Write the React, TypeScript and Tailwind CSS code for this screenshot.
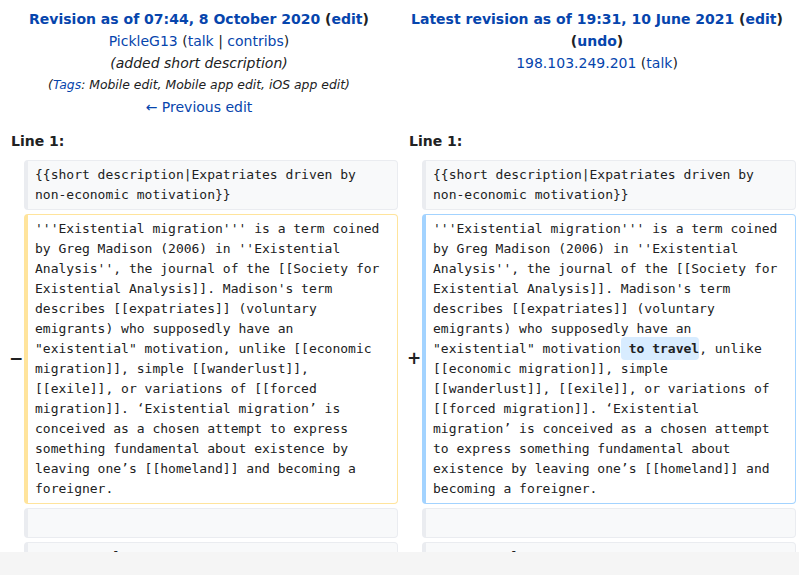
import React from 'react';

const link = 'text-[#0645ad]';

const oldLines = [
  "'''Existential migration''' is a term coined",
  "by Greg Madison (2006) in ''Existential",
  "Analysis'', the journal of the [[Society for",
  "Existential Analysis]]. Madison's term",
  'describes [[expatriates]] (voluntary',
  'emigrants) who supposedly have an',
  '"existential" motivation, unlike [[economic',
  'migration]], simple [[wanderlust]],',
  '[[exile]], or variations of [[forced',
  'migration]]. ‘Existential migration’ is',
  'conceived as a chosen attempt to express',
  'something fundamental about existence by',
  'leaving one’s [[homeland]] and becoming a',
  'foreigner.',
];

const newLines: React.ReactNode[] = [
  "'''Existential migration''' is a term coined",
  "by Greg Madison (2006) in ''Existential",
  "Analysis'', the journal of the [[Society for",
  "Existential Analysis]]. Madison's term",
  'describes [[expatriates]] (voluntary',
  'emigrants) who supposedly have an',
  <>
    "existential" motivation
    <span className="bg-[#d8ecff] font-bold rounded-[4px] py-[4px]">{'\u00a0'}to travel</span>, unlike
  </>,
  '[[economic migration]], simple',
  '[[wanderlust]], [[exile]], or variations of',
  '[[forced migration]]. ‘Existential',
  'migration’ is conceived as a chosen attempt',
  'to express something fundamental about',
  'existence by leaving one’s [[homeland]] and',
  'becoming a foreigner.',
];

type Kind = 'context' | 'deleted' | 'added';

function Cell({ kind, lines }: { kind: Kind; lines: React.ReactNode[] }) {
  const tone =
    kind === 'context'
      ? 'bg-[#f8f9fa] border-[#eaecf0]'
      : kind === 'deleted'
        ? 'bg-white border-[#ffe49c]'
        : 'bg-white border-[#a3d3ff]';
  return (
    <div
      className={`${tone} border border-l-4 rounded-[4px] pl-[7px] pr-[7px] py-[4px] font-['DejaVu_Sans_Mono','Liberation_Mono',monospace] text-[13px] leading-[20px] text-[#202122] whitespace-pre`}
    >
      {lines.map((l, i) => (
        <div key={i}>{l === '' ? '\u00a0' : l}</div>
      ))}
    </div>
  );
}

function Marker({ sign }: { sign?: string }) {
  return (
    <div className="flex items-center justify-center pl-[8px] font-bold text-[17px] text-[#202122]">
      {sign}
    </div>
  );
}

export default function App() {
  return (
    <div className="w-[799px] h-[575px] flex flex-col bg-white font-['DejaVu_Sans','Liberation_Sans',sans-serif] text-[#202122]">
      <div className="h-[552px] overflow-hidden">
        <div className="grid grid-cols-[398px_398px] pt-[8px] text-[14px] leading-[22px] text-center">
          <div>
            <div className="font-bold">
              <a className={link}>Revision as of 07:44, 8 October 2020</a> (<a className={link}>edit</a>)
            </div>
            <div>
              <a className={link}>PickleG13</a> (<a className={link}>talk</a> | <a className={link}>contribs</a>)
            </div>
            <div className="italic">(added short description)</div>
            <div className="italic text-[12.4px]">
              (<a className={link}>Tags</a>: Mobile edit, Mobile app edit, iOS app edit)
            </div>
            <div>
              <a className={link}>← Previous edit</a>
            </div>
          </div>
          <div>
            <div className="font-bold">
              <a className={link}>Latest revision as of 19:31, 10 June 2021</a> (<a className={link}>edit</a>)
            </div>
            <div className="font-bold">
              (<a className={link}>undo</a>)
            </div>
            <div>
              <a className={link}>198.103.249.201</a> (<a className={link}>talk</a>)
            </div>
          </div>
        </div>

        <div className="grid grid-cols-[398px_398px] mt-[12px] text-[14px] leading-[22px] font-bold">
          <div className="pl-[11px]">Line 1:</div>
          <div className="pl-[11px]">Line 1:</div>
        </div>

        <div className="grid grid-cols-[24px_374px_24px_374px] gap-y-[4px] mt-[8px]">
          <Marker />
          <Cell kind="context" lines={['{{short description|Expatriates driven by', 'non-economic motivation}}']} />
          <Marker />
          <Cell kind="context" lines={['{{short description|Expatriates driven by', 'non-economic motivation}}']} />

          <Marker sign="−" />
          <Cell kind="deleted" lines={oldLines} />
          <Marker sign="+" />
          <Cell kind="added" lines={newLines} />

          <Marker />
          <Cell kind="context" lines={['']} />
          <Marker />
          <Cell kind="context" lines={['']} />

          <Marker />
          <Cell kind="context" lines={['== Personal ==']} />
          <Marker />
          <Cell kind="context" lines={['== Personal ==']} />
        </div>
      </div>
      <div className="h-[23px] bg-[#f5f5f5]" />
    </div>
  );
}
